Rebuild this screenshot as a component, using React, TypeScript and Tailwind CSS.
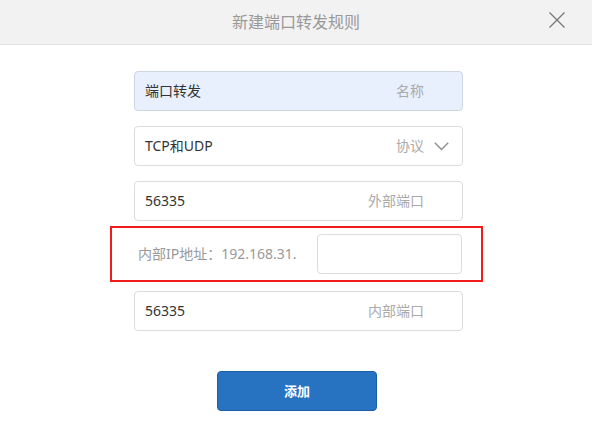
import React from "react";

const font = { fontFamily: '"Noto Sans", "Noto Sans CJK SC", sans-serif' };

function Field({ value, label, chevron = false, filled = false }: { value: string; label: string; chevron?: boolean; filled?: boolean }) {
  return (
    <div
      className={`flex h-[40px] w-[329px] items-center rounded-[4px] border ${
        filled ? "border-[#cfd6e2] bg-[#e8f0fe]" : "border-[#dcdcdc] bg-white"
      } pl-[10px] ${chevron ? "pr-[13px]" : "pr-[38px]"}`}
    >
      <span className="flex-1 text-[14px] leading-[20px] text-[#333]">{value}</span>
      <span className="text-[14px] leading-[20px] text-[#aaa]">{label}</span>
      {chevron && (
        <svg className="ml-[10px]" width="15" height="9" viewBox="0 0 15 9" fill="none">
          <path d="M0.8 0.8 L7.5 7.6 L14.2 0.8" stroke="#8f8f8f" strokeWidth="1.4" />
        </svg>
      )}
    </div>
  );
}

export default function App() {
  return (
    <div className="h-[436px] w-[592px] overflow-hidden bg-white" style={font}>
      <div className="relative flex h-[45px] items-center justify-center border-b border-[#e3e3e3] bg-[#f2f2f2]">
        <span className="text-[16px] leading-[20px] text-[#999]">新建端口转发规则</span>
        <svg className="absolute right-[27px] top-[12px]" width="16" height="16" viewBox="0 0 16 16" fill="none">
          <path d="M0.5 0.5 L15.5 15.5 M15.5 0.5 L0.5 15.5" stroke="#777" strokeWidth="1.3" />
        </svg>
      </div>
      <div className="flex flex-col pt-[26px]">
        <div className="pl-[134px]">
          <Field value="端口转发" label="名称" filled />
        </div>
        <div className="mt-[15px] pl-[134px]">
          <Field value="TCP和UDP" label="协议" chevron />
        </div>
        <div className="mt-[15px] pl-[134px]">
          <Field value="56335" label="外部端口" />
        </div>
        <div className="ml-[110px] mt-[5px] flex h-[56px] w-[373px] items-center border-2 border-[#f21b1b] pl-[26px] pr-[19px]">
          <span className="flex-1 text-[14px] leading-[20px] text-[#999]">内部IP地址：192.168.31.</span>
          <div className="h-[40px] w-[145px] rounded-[4px] border border-[#dcdcdc] bg-white" />
        </div>
        <div className="mt-[9px] pl-[134px]">
          <Field value="56335" label="内部端口" />
        </div>
        <div className="mt-[40px] pl-[217px]">
          <button className="flex h-[40px] w-[160px] items-center justify-center rounded-[4px] border border-[#1b5ea6] bg-[#2773c1] text-[13px] font-bold leading-[18px] text-white">
            添加
          </button>
        </div>
      </div>
    </div>
  );
}
